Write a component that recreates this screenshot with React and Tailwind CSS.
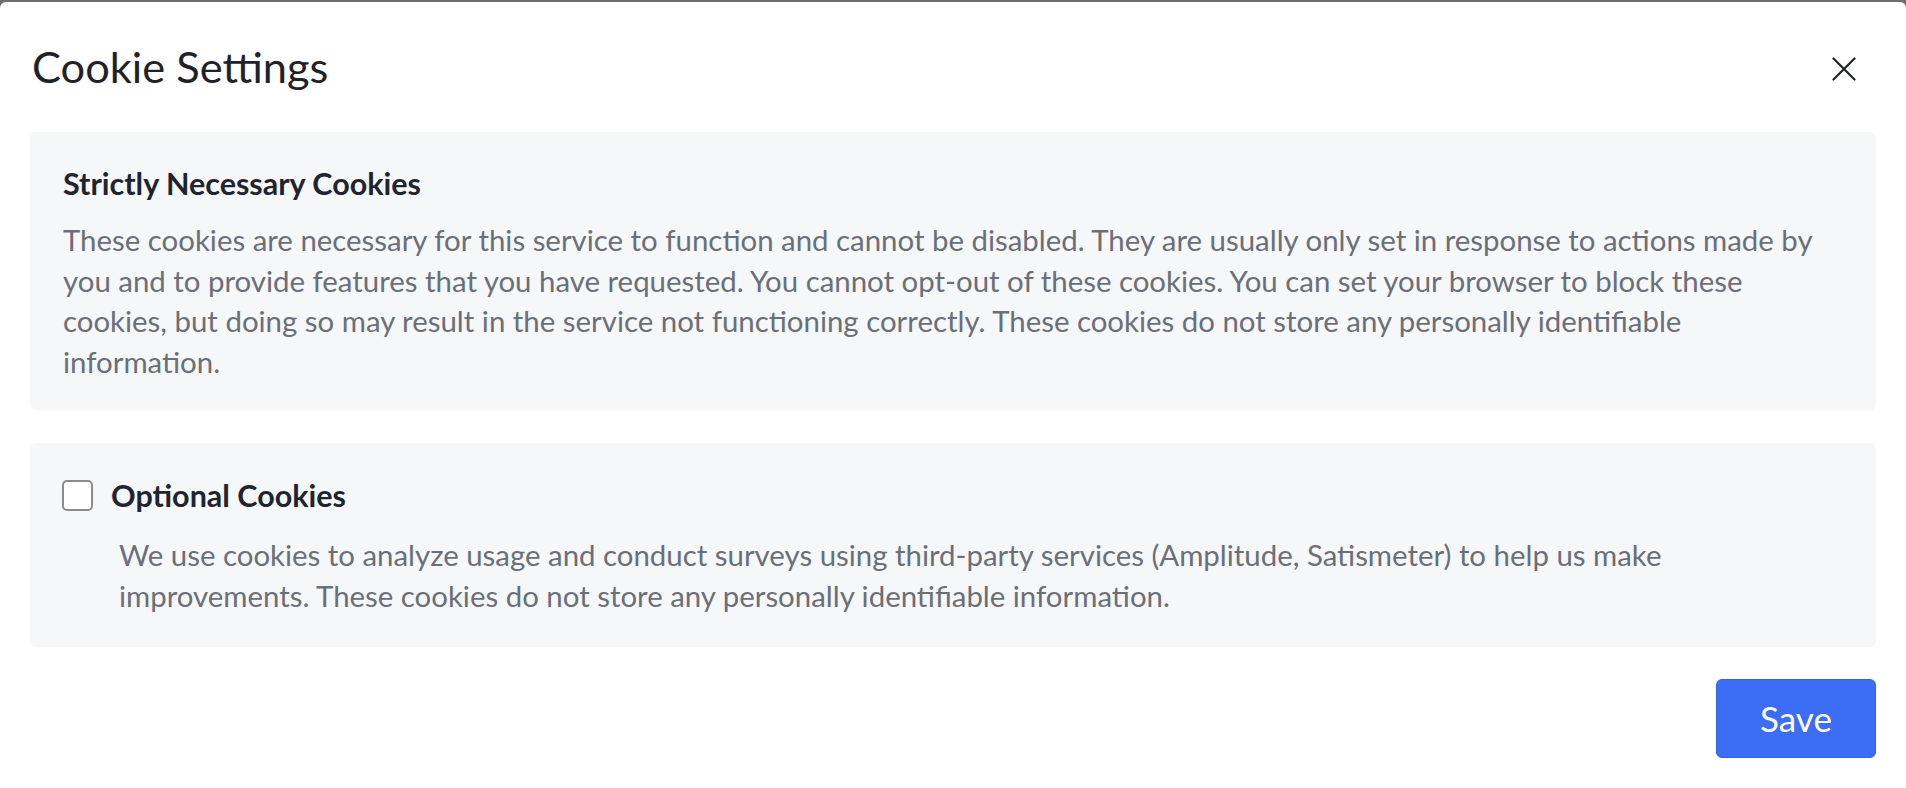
import React, { useState } from 'react';

const font = { fontFamily: 'Lato, "Noto Sans", sans-serif' };

export default function App() {
  const [optional, setOptional] = useState(false);

  return (
    <div className="min-h-screen bg-[#6e6e6e] pt-[2px]" style={font}>
      <div className="h-[786px] bg-white rounded-t-[6px] flex flex-col">
        <div className="flex items-center justify-between pl-[32px] pr-[50px] pt-[38px]">
          <h1 className="text-[43.4px] leading-[52px] text-[#1f2328]">Cookie Settings</h1>
          <button className="w-[24px] h-[24px] mt-[5px] text-[#1f2328]">
            <svg width="24" height="24" viewBox="0 0 24 24" fill="none" stroke="currentColor" strokeWidth="2.2" strokeLinecap="round">
              <path d="M1.5 1.5L22.5 22.5M22.5 1.5L1.5 22.5" />
            </svg>
          </button>
        </div>

        <div className="px-[30px] mt-[40px] flex flex-col gap-[33px]">
          <div className="bg-[#f6f7f9] rounded-[6px] pl-[33px] pr-[33px] pt-[33px] pb-[28px]">
            <h2 className="text-[30.5px] leading-[36px] font-bold text-[#1f2530]">Strictly Necessary Cookies</h2>
            <p className="mt-[19px] text-[29.4px] leading-[40.5px] text-[#6a6f78]">
              These cookies are necessary for this service to function and cannot be disabled. They are usually only set in response to actions made by you and to provide features that you have requested. You cannot opt-out of these cookies. You can set your browser to block these cookies, but doing so may result in the service not functioning correctly. These cookies do not store any personally identifiable information.
            </p>
          </div>

          <div className="bg-[#f6f7f9] rounded-[6px] pl-[32px] pr-[33px] pt-[34px] pb-[31px]">
            <label className="flex items-center gap-[18px] cursor-pointer">
              <input
                type="checkbox"
                checked={optional}
                onChange={(e) => setOptional(e.target.checked)}
                className="appearance-none w-[31px] h-[31px] rounded-[5px] border-2 border-[#8c8c8c] bg-white checked:bg-[#3c6df5] checked:border-[#3c6df5]"
              />
              <span className="text-[30.5px] leading-[36px] font-bold text-[#1f2530]">Optional Cookies</span>
            </label>
            <p className="mt-[22px] ml-[57px] mr-[90px] text-[29.4px] leading-[40.5px] text-[#6a6f78]">
              We use cookies to analyze usage and conduct surveys using third-party services (Amplitude, Satismeter) to help us make improvements. These cookies do not store any personally identifiable information.
            </p>
          </div>
        </div>

        <div className="flex justify-end px-[30px] mt-[32px]">
          <button className="w-[160px] h-[79px] rounded-[6px] bg-[#3c6df5] border border-[#3463df] text-white text-[35px]">
            Save
          </button>
        </div>
      </div>
    </div>
  );
}
